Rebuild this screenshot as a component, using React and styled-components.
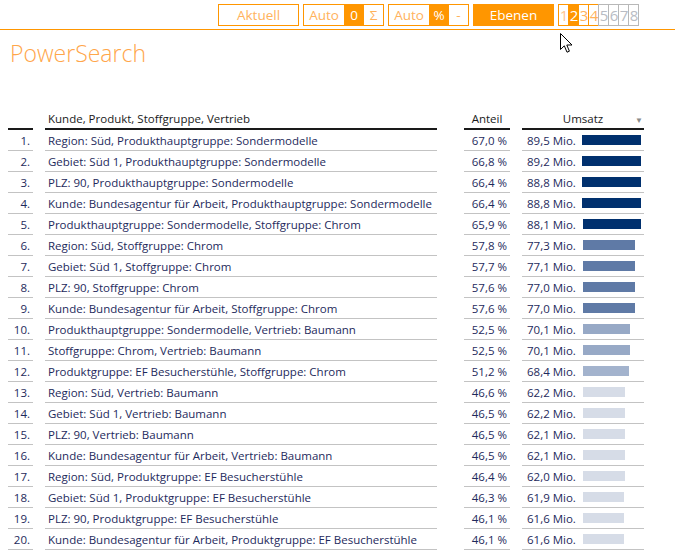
import React from 'react';
import styled, { createGlobalStyle } from 'styled-components';

const ORANGE = '#ff9600';
const ORANGE_TEXT = '#ffb25c';
const NAVY = '#1e2a5c';

const rows = [
    ['Region: Süd, Produkthauptgruppe: Sondermodelle', '67,0', 89.5],
    ['Gebiet: Süd 1, Produkthauptgruppe: Sondermodelle', '66,8', 89.2],
    ['PLZ: 90, Produkthauptgruppe: Sondermodelle', '66,4', 88.8],
    ['Kunde: Bundesagentur für Arbeit, Produkthauptgruppe: Sondermodelle', '66,4', 88.8],
    ['Produkthauptgruppe: Sondermodelle, Stoffgruppe: Chrom', '65,9', 88.1],
    ['Region: Süd, Stoffgruppe: Chrom', '57,8', 77.3],
    ['Gebiet: Süd 1, Stoffgruppe: Chrom', '57,7', 77.1],
    ['PLZ: 90, Stoffgruppe: Chrom', '57,6', 77.0],
    ['Kunde: Bundesagentur für Arbeit, Stoffgruppe: Chrom', '57,6', 77.0],
    ['Produkthauptgruppe: Sondermodelle, Vertrieb: Baumann', '52,5', 70.1],
    ['Stoffgruppe: Chrom, Vertrieb: Baumann', '52,5', 70.1],
    ['Produktgruppe: EF Besucherstühle, Stoffgruppe: Chrom', '51,2', 68.4],
    ['Region: Süd, Vertrieb: Baumann', '46,6', 62.2],
    ['Gebiet: Süd 1, Vertrieb: Baumann', '46,5', 62.2],
    ['PLZ: 90, Vertrieb: Baumann', '46,5', 62.1],
    ['Kunde: Bundesagentur für Arbeit, Vertrieb: Baumann', '46,5', 62.1],
    ['Region: Süd, Produktgruppe: EF Besucherstühle', '46,4', 62.0],
    ['Gebiet: Süd 1, Produktgruppe: EF Besucherstühle', '46,3', 61.9],
    ['PLZ: 90, Produktgruppe: EF Besucherstühle', '46,1', 61.6],
    ['Kunde: Bundesagentur für Arbeit, Produktgruppe: EF Besucherstühle', '46,1', 61.6],
];

const barColor = (v) => {
    if (v >= 85) return '#00306e';
    if (v >= 75) return '#5f7aa6';
    if (v >= 69) return '#97a9c6';
    if (v >= 65) return '#a3b3cd';
    return '#d6dce7';
};

const fmt = (v) => v.toFixed(1).replace('.', ',');

const App = () => {
    return (
        <Page>
            <GlobalStyle />
            <Toolbar>
                <Button>Aktuell</Button>
                <Group>
                    <Seg w={40}>Auto</Seg>
                    <Seg w={20} active>0</Seg>
                    <Seg w={19}>Σ</Seg>
                </Group>
                <Group>
                    <Seg w={40}>Auto</Seg>
                    <Seg w={20} active>%</Seg>
                    <Seg w={19}>-</Seg>
                </Group>
                <Button active>Ebenen</Button>
                <Levels>
                    <Level state='faded'>1</Level>
                    <Level state='active'>2</Level>
                    <Level state='on'>3</Level>
                    <Level state='on'>4</Level>
                    <Level state='off'>5</Level>
                    <Level state='off'>6</Level>
                    <Level state='off'>7</Level>
                    <Level state='off'>8</Level>
                </Levels>
            </Toolbar>
            <Cursor width='13' height='21' viewBox='0 0 13 21'>
                <path d='M0.5 0.5 L0.5 16.5 L4.3 12.8 L7 19.2 L9.4 18.2 L6.8 12 L12 12 Z' fill='#fff' stroke='#000' strokeWidth='1' strokeLinejoin='miter' />
            </Cursor>
            <Title>PowerSearch</Title>
            <Table>
                <HeadRow>
                    <HeadCell w={25} />
                    <HeadCell w={392} gap={12}>Kunde, Produkt, Stoffgruppe, Vertrieb</HeadCell>
                    <HeadCell w={46} gap={27} center>Anteil</HeadCell>
                    <HeadCell w={122} gap={12} center>
                        Umsatz
                        <SortMark>▼</SortMark>
                    </HeadCell>
                </HeadRow>
                {rows.map(([label, share, value], i) => (
                    <Row key={i}>
                        <Cell w={25} right>{i + 1}.</Cell>
                        <Cell w={392} gap={12}>{label}</Cell>
                        <Cell w={46} gap={27} right>{share} %</Cell>
                        <Cell w={122} gap={12}>
                            <Amount>{fmt(value)} Mio.</Amount>
                            <Bar color={barColor(value)} style={{ width: Math.round(value * 60 / 89.5) }} />
                        </Cell>
                    </Row>
                ))}
            </Table>
        </Page>
    );
};

export default App;

const GlobalStyle = createGlobalStyle`
    body {
        margin: 0;
        background: #ffffff;
        font-family: "Segoe UI", "Open Sans", "Noto Sans", sans-serif;
    }
`;

const Page = styled.div`
    position: relative;
    width: 675px;
    height: 557px;
    overflow: hidden;
    background: #ffffff;
`;

const Toolbar = styled.div`
    display: flex;
    align-items: flex-start;
    gap: 4px;
    height: 30px;
    box-sizing: border-box;
    padding: 4px 0 0 218px;
    border-bottom: 1px solid ${ORANGE};
    font-size: 13.5px;
`;

const Button = styled.div`
    width: 81px;
    height: 22px;
    box-sizing: border-box;
    display: flex;
    align-items: center;
    justify-content: center;
    border: 1px solid ${ORANGE};
    background: ${p => p.active ? ORANGE : '#fff'};
    color: ${p => p.active ? '#fff' : ORANGE_TEXT};
`;

const Group = styled.div`
    display: flex;
    height: 22px;
    box-sizing: border-box;
    border: 1px solid ${ORANGE};
`;

const Seg = styled.div`
    width: ${p => p.w}px;
    display: flex;
    align-items: center;
    justify-content: center;
    background: ${p => p.active ? ORANGE : '#fff'};
    color: ${p => p.active ? '#fff' : ORANGE_TEXT};
`;

const Levels = styled.div`
    display: flex;
    padding-left: 1px;
`;

const levelColors = {
    faded: { border: ORANGE, bg: '#fff', text: '#ffc590' },
    active: { border: ORANGE, bg: ORANGE, text: '#fff' },
    on: { border: ORANGE, bg: '#fff', text: ORANGE_TEXT },
    off: { border: '#b8b8b8', bg: '#fff', text: '#b8bcc4' },
};

const Level = styled.div`
    width: 11px;
    height: 22px;
    margin-left: -1px;
    box-sizing: border-box;
    display: flex;
    align-items: center;
    justify-content: center;
    font-size: 15px;
    letter-spacing: -1px;
    overflow: visible;
    border: 1px solid ${p => levelColors[p.state].border};
    background: ${p => levelColors[p.state].bg};
    color: ${p => levelColors[p.state].text};
`;

const Cursor = styled.svg`
    position: absolute;
    left: 560px;
    top: 33px;
`;

const Title = styled.div`
    padding: 8px 0 0 10px;
    height: 40px;
    font-size: 23px;
    font-weight: 300;
    color: #ffa64a;
    line-height: 30px;
`;

const Table = styled.div`
    margin: 32px 0 0 8px;
    display: flex;
    flex-direction: column;
    font-size: 11.5px;
`;

const HeadRow = styled.div`
    display: flex;
    height: 20px;
`;

const HeadCell = styled.div`
    position: relative;
    width: ${p => p.w}px;
    margin-left: ${p => p.gap || 0}px;
    box-sizing: border-box;
    padding: 0 3px;
    border-bottom: 2px solid #1a1a1a;
    color: #1a1a1a;
    line-height: 18px;
    text-align: ${p => p.center ? 'center' : 'left'};
    white-space: nowrap;
`;

const SortMark = styled.span`
    position: absolute;
    right: 1px;
    top: 1px;
    font-size: 8px;
    color: #8a8a8a;
`;

const Row = styled.div`
    display: flex;
    height: 21px;
`;

const Cell = styled.div`
    width: ${p => p.w}px;
    margin-left: ${p => p.gap || 0}px;
    box-sizing: border-box;
    padding: 0 3px;
    display: flex;
    align-items: center;
    justify-content: ${p => p.right ? 'flex-end' : 'flex-start'};
    border-bottom: 1px solid #c3c3c3;
    color: ${NAVY};
    white-space: nowrap;
`;

const Amount = styled.span`
    width: 58px;
    padding-left: 2px;
    box-sizing: border-box;
`;

const Bar = styled.div`
    height: 10px;
    background: ${p => p.color};
`;
